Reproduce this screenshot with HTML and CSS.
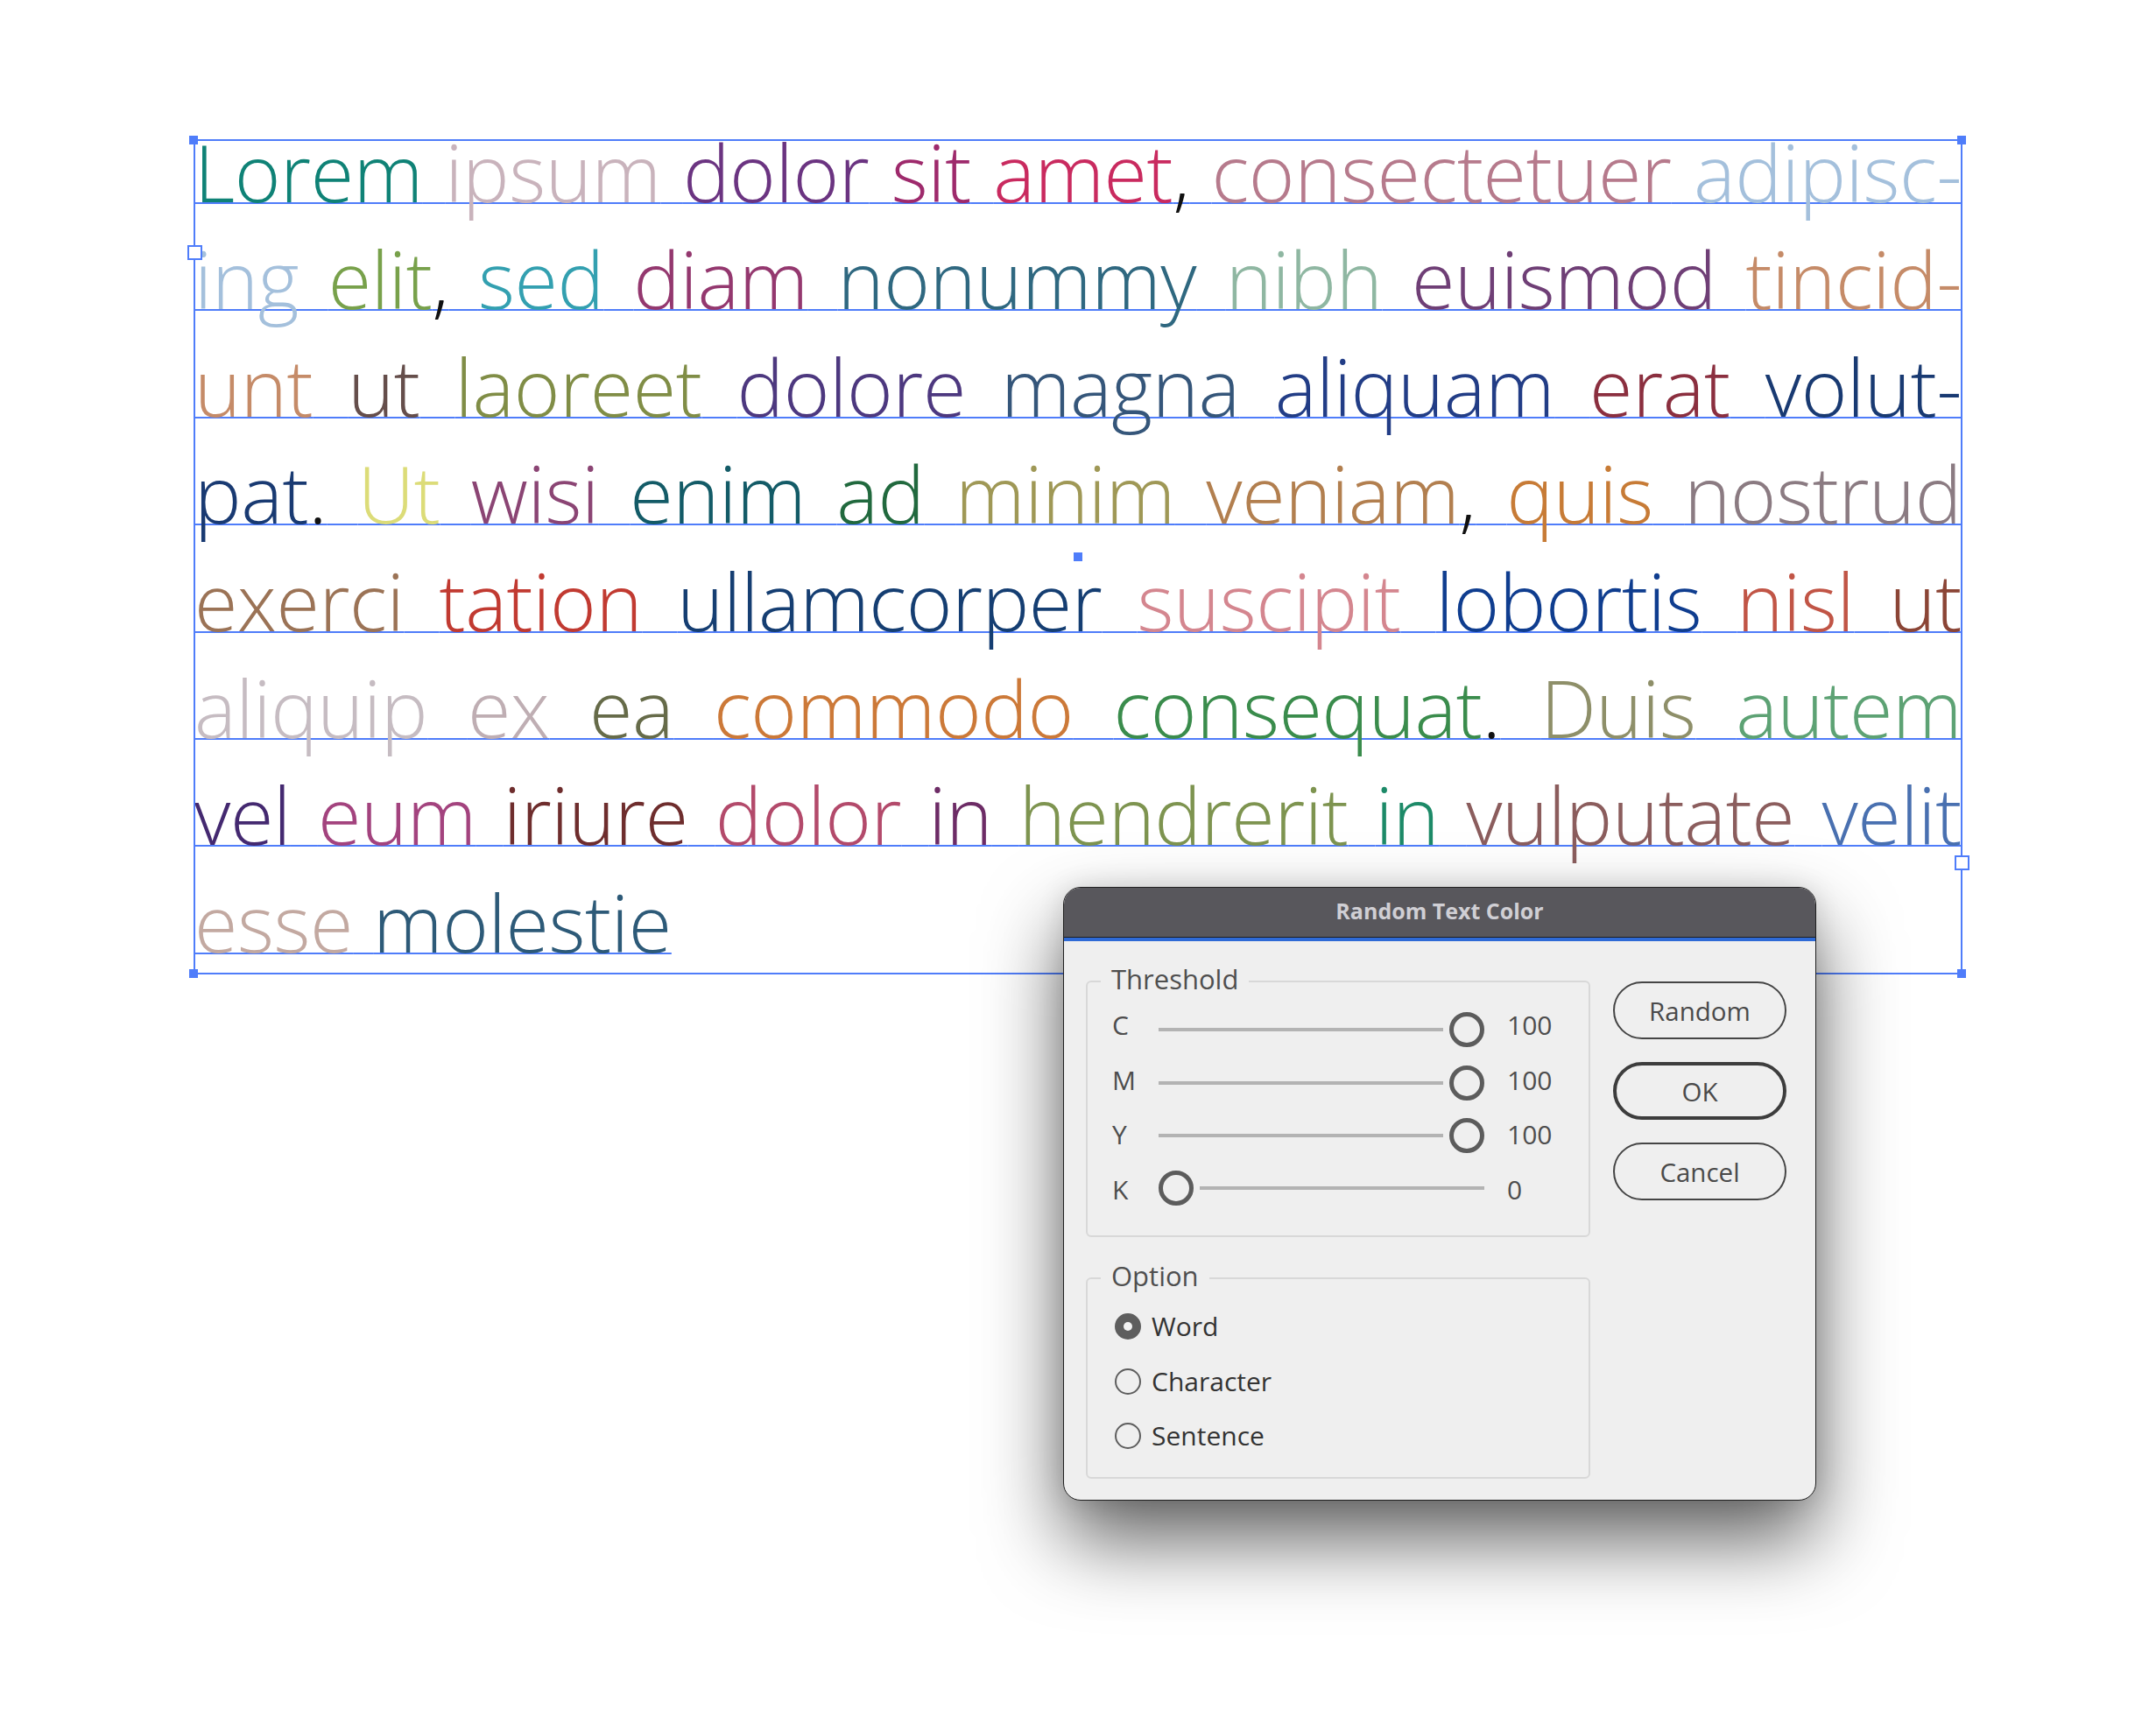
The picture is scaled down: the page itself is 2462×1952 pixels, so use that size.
FILE: index.html
```html
<!DOCTYPE html>
<html lang="en">
<head>
<meta charset="utf-8">
<title>Random Text Color</title>
<link rel="stylesheet" href="styles.css">
</head>
<body>
<div class="stage">
  <div class="frame">
    <div class="text">
      <div class="line"><span class="c1">Lorem</span> <span class="c2">ipsum</span> <span class="c3">dolor</span> <span class="c4">sit</span> <span class="c5">amet</span><span class="p">,</span> <span class="c6">consectetuer</span> <span class="c7">adipisc-</span></div>
      <div class="line"><span class="c7">ing</span> <span class="c8">elit</span><span class="p">,</span> <span class="c9">sed</span> <span class="c10">diam</span> <span class="c11">nonummy</span> <span class="c12">nibh</span> <span class="c13">euismod</span> <span class="c14">tincid-</span></div>
      <div class="line"><span class="c14">unt</span> <span class="c15">ut</span> <span class="c16">laoreet</span> <span class="c17">dolore</span> <span class="c18">magna</span> <span class="c19">aliquam</span> <span class="c20">erat</span> <span class="c21">volut-</span></div>
      <div class="line"><span class="c21">pat</span><span class="p">.</span> <span class="c22">Ut</span> <span class="c23">wisi</span> <span class="c24">enim</span> <span class="c25">ad</span> <span class="c26">minim</span> <span class="c27">veniam</span><span class="p">,</span> <span class="c28">quis</span> <span class="c29">nostrud</span></div>
      <div class="line"><span class="c30">exerci</span> <span class="c31">tation</span> <span class="c32">ullamcorper</span> <span class="c33">suscipit</span> <span class="c34">lobortis</span> <span class="c35">nisl</span> <span class="c36">ut</span></div>
      <div class="line"><span class="c37">aliquip</span> <span class="c38">ex</span> <span class="c39">ea</span> <span class="c40">commodo</span> <span class="c41">consequat</span><span class="p">.</span> <span class="c42">Duis</span> <span class="c43">autem</span></div>
      <div class="line"><span class="c44">vel</span> <span class="c45">eum</span> <span class="c46">iriure</span> <span class="c47">dolor</span> <span class="c48">in</span> <span class="c49">hendrerit</span> <span class="c50">in</span> <span class="c51">vulputate</span> <span class="c52">velit</span></div>
      <div class="line last"><span class="c53">esse</span> <span class="c54">molestie</span></div>
    </div>
    <div class="bbox"></div>
    <div class="handle h-tl"></div>
    <div class="handle h-tr"></div>
    <div class="handle h-bl"></div>
    <div class="handle h-br"></div>
    <div class="port port-in"></div>
    <div class="port port-out"></div>
    <div class="handle h-center"></div>
  </div>

  <div class="dialog">
    <div class="titlebar">Random Text Color</div>
    <div class="accent"></div>
    <div class="body">
      <div class="groups">
        <fieldset class="group">
          <legend>Threshold</legend>
          <div class="rows sliders">
            <div class="srow r1"><span class="lbl">C</span><div class="slider"><div class="track"></div><div class="knob"></div></div><span class="val">100</span></div>
            <div class="srow r2"><span class="lbl">M</span><div class="slider"><div class="track"></div><div class="knob"></div></div><span class="val">100</span></div>
            <div class="srow r3"><span class="lbl">Y</span><div class="slider"><div class="track"></div><div class="knob"></div></div><span class="val">100</span></div>
            <div class="srow r4"><span class="lbl">K</span><div class="slider"><div class="knob"></div><div class="track"></div></div><span class="val">0</span></div>
          </div>
        </fieldset>
        <fieldset class="group">
          <legend>Option</legend>
          <div class="rows radios">
            <div class="rrow"><span class="radio on"></span><span class="rlbl">Word</span></div>
            <div class="rrow"><span class="radio"></span><span class="rlbl">Character</span></div>
            <div class="rrow"><span class="radio"></span><span class="rlbl">Sentence</span></div>
          </div>
        </fieldset>
      </div>
      <div class="buttons">
        <div class="btn">Random</div>
        <div class="btn default">OK</div>
        <div class="btn">Cancel</div>
      </div>
    </div>
  </div>
</div>
</body>
</html>
```
FILE: styles.css
```css
html, body {
  margin: 0;
  padding: 0;
  background: #ffffff;
}
.stage {
  position: relative;
  width: 2462px;
  height: 1952px;
  padding: 160px 0 0 222px;
  box-sizing: border-box;
}
.frame {
  position: relative;
  display: flow-root;
  width: 2018px;
  height: 952px;
}
.text {
  margin-top: -25px;
  font-family: "Open Sans", "Lato", sans-serif;
  font-weight: 300;
  font-size: 90px;
  letter-spacing: -0.4px;
  line-height: 122.4px;
}
.line {
  white-space: nowrap;
  text-align: justify;
  text-align-last: justify;
  text-decoration: underline;
  text-decoration-color: #4f7dfa;
  text-decoration-thickness: 2px;
  text-underline-offset: 0px;
  text-decoration-skip-ink: none;
}
.line.last {
  text-align: left;
  text-align-last: left;
}
.p { color: #111111; }
.c1 { color: #0f8276; }
.c2 { color: #c9b3bc; }
.c3 { color: #6b3481; }
.c4 { color: #9e2a6c; }
.c5 { color: #c92a5f; }
.c6 { color: #b67a8c; }
.c7 { color: #a4c0dc; }
.c8 { color: #78a14b; }
.c9 { color: #33a0b0; }
.c10 { color: #94386f; }
.c11 { color: #2f6880; }
.c12 { color: #8fb7a2; }
.c13 { color: #6f3f76; }
.c14 { color: #c58b68; }
.c15 { color: #654e4b; }
.c16 { color: #808d46; }
.c17 { color: #4d387f; }
.c18 { color: #35567a; }
.c19 { color: #223d86; }
.c20 { color: #8b2f3f; }
.c21 { color: #193a72; }
.c22 { color: #dcdc78; }
.c23 { color: #8b4574; }
.c24 { color: #135b67; }
.c25 { color: #21693e; }
.c26 { color: #9f9856; }
.c27 { color: #b27f4f; }
.c28 { color: #c77b36; }
.c29 { color: #8b7b82; }
.c30 { color: #9b7356; }
.c31 { color: #c13a31; }
.c32 { color: #153e72; }
.c33 { color: #d4868f; }
.c34 { color: #0f3d8f; }
.c35 { color: #c15546; }
.c36 { color: #8b4536; }
.c37 { color: #c6bcc2; }
.c38 { color: #bfaeb3; }
.c39 { color: #666b49; }
.c40 { color: #cc7938; }
.c41 { color: #3a8c4c; }
.c42 { color: #8e8f69; }
.c43 { color: #5da274; }
.c44 { color: #442970; }
.c45 { color: #a3437e; }
.c46 { color: #6e2d2d; }
.c47 { color: #b34a6b; }
.c48 { color: #6d2c66; }
.c49 { color: #7e9450; }
.c50 { color: #1d8a68; }
.c51 { color: #8b5d5d; }
.c52 { color: #4970b0; }
.c53 { color: #c3a9a1; }
.c54 { color: #2d5a78; }

/* selection overlay */
.bbox {
  position: absolute;
  left: -1px;
  top: -1px;
  width: 2020px;
  height: 954px;
  border: 2px solid #4f7dfa;
  box-sizing: border-box;
  pointer-events: none;
}
.handle {
  position: absolute;
  width: 10px;
  height: 10px;
  background: #4f7dfa;
}
.h-tl { left: -6px; top: -5px; }
.h-tr { left: 2013px; top: -5px; }
.h-bl { left: -6px; top: 947px; }
.h-br { left: 2013px; top: 947px; }
.h-center { left: 1004px; top: 471px; }
.port {
  position: absolute;
  width: 17px;
  height: 17px;
  background: #ffffff;
  border: 2px solid #4f7dfa;
  box-sizing: border-box;
}
.port-in { left: -8px; top: 120px; }
.port-out { left: 2010px; top: 817px; }

/* dialog */
.dialog {
  position: absolute;
  left: 1214px;
  top: 1013px;
  width: 860px;
  height: 701px;
  box-sizing: border-box;
  border: 1px solid #202020;
  border-radius: 20px;
  background: #efefef;
  overflow: hidden;
  box-shadow: 0 45px 90px rgba(0, 0, 0, 0.62), 0 0 30px rgba(0, 0, 0, 0.12);
  font-family: "Open Sans", "Noto Sans", sans-serif;
  color: #4b4b4b;
}
.titlebar {
  height: 56px;
  line-height: 52px;
  background: #58575c;
  border-bottom: 1px solid #1e1e1e;
  text-align: center;
  font-weight: 700;
  font-size: 25px;
  color: #d0cfd4;
}
.accent {
  height: 4px;
  background: #2e6ad6;
}
.body {
  display: flex;
  gap: 26px;
  padding: 25px 0 0 25px;
}
.groups {
  width: 576px;
  display: flex;
  flex-direction: column;
  gap: 26px;
}
.group {
  margin: 0;
  padding: 0;
  border: 2px solid #d8d8d8;
  border-radius: 6px;
  min-width: 0;
}
.group legend {
  margin-left: 15px;
  padding: 0 12px 5px;
  font-size: 31px;
  line-height: 37px;
  color: #4f4f4f;
}
.sliders {
  margin-top: -2px;
  padding: 0 0 21px 28px;
}
.srow {
  display: grid;
  grid-template-columns: 53px 372px auto;
  align-items: center;
  height: 62.5px;
  font-size: 30px;
}
.lbl, .val {
  line-height: 40px;
  color: #4d4d4d;
}
.val {
  margin-left: 26px;
}
.slider {
  display: flex;
  align-items: center;
  gap: 7px;
  height: 40px;
}
.r1 .slider { margin-top: 10px; }
.r2 .slider { margin-top: 6px; }
.r3 .slider { margin-top: 1px; }
.r4 .slider { margin-bottom: 3px; }
.track {
  flex: 1;
  height: 4px;
  background: #b3b3b3;
}
.knob {
  width: 40px;
  height: 40px;
  box-sizing: border-box;
  border: 5px solid #5c5c5c;
  border-radius: 50%;
  background: #efefef;
  flex: none;
}
.radios {
  padding: 3px 0 15px 31px;
}
.rrow {
  display: flex;
  align-items: center;
  gap: 12px;
  height: 62.5px;
}
.radio {
  width: 30px;
  height: 30px;
  box-sizing: border-box;
  border: 2px solid #5e5e5e;
  border-radius: 50%;
  flex: none;
  display: flex;
  align-items: center;
  justify-content: center;
}
.radio.on {
  background: #5e5e5e;
}
.radio.on::after {
  content: "";
  width: 10px;
  height: 10px;
  border-radius: 50%;
  background: #f2f2f2;
}
.rlbl {
  font-size: 30px;
  line-height: 40px;
  color: #333333;
}
.buttons {
  width: 198px;
  display: flex;
  flex-direction: column;
  gap: 26px;
  margin-top: 21px;
}
.btn {
  height: 66px;
  box-sizing: border-box;
  border: 2px solid #454545;
  border-radius: 33px;
  display: flex;
  align-items: center;
  justify-content: center;
  font-size: 29.5px;
  color: #4a4a4a;
}
.btn.default {
  border: 4px solid #3d3d3d;
}
```
